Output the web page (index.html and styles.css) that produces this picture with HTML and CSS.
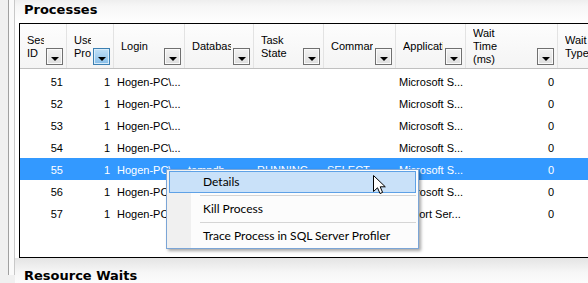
FILE: index.html
```html
<!DOCTYPE html>
<html lang="en">
<head>
    <meta charset="UTF-8">
    <title>Activity Monitor - Processes</title>
    <link rel="stylesheet" href="styles.css">
</head>
<body>
    <div class="frame">
        <div class="panel">
            <div class="section-title first">Processes</div>

            <div class="grid">
                <div class="grid-head">
                    <div class="head-cell"><span class="label">Session<br>ID</span><span class="drop"></span></div>
                    <div class="head-cell"><span class="label">User<br>Process</span><span class="drop active"></span></div>
                    <div class="head-cell"><span class="label">Login</span><span class="drop"></span></div>
                    <div class="head-cell"><span class="label">Database</span><span class="drop"></span></div>
                    <div class="head-cell"><span class="label">Task<br>State</span><span class="drop"></span></div>
                    <div class="head-cell"><span class="label">Command</span><span class="drop"></span></div>
                    <div class="head-cell"><span class="label">Application</span><span class="drop"></span></div>
                    <div class="head-cell"><span class="label">Wait<br>Time<br>(ms)</span><span class="drop"></span></div>
                    <div class="head-cell"><span class="label">Wait<br>Type</span><span class="drop"></span></div>
                </div>
                <div class="grid-body">
                    <div class="row">
                        <div class="cell num">51</div><div class="cell num">1</div><div class="cell">Hogen-PC\...</div>
                        <div class="cell"></div><div class="cell"></div><div class="cell"></div>
                        <div class="cell">Microsoft S...</div><div class="cell num">0</div><div class="cell"></div>
                    </div>
                    <div class="row">
                        <div class="cell num">52</div><div class="cell num">1</div><div class="cell">Hogen-PC\...</div>
                        <div class="cell"></div><div class="cell"></div><div class="cell"></div>
                        <div class="cell">Microsoft S...</div><div class="cell num">0</div><div class="cell"></div>
                    </div>
                    <div class="row">
                        <div class="cell num">53</div><div class="cell num">1</div><div class="cell">Hogen-PC\...</div>
                        <div class="cell"></div><div class="cell"></div><div class="cell"></div>
                        <div class="cell">Microsoft S...</div><div class="cell num">0</div><div class="cell"></div>
                    </div>
                    <div class="row">
                        <div class="cell num">54</div><div class="cell num">1</div><div class="cell">Hogen-PC\...</div>
                        <div class="cell"></div><div class="cell"></div><div class="cell"></div>
                        <div class="cell">Microsoft S...</div><div class="cell num">0</div><div class="cell"></div>
                    </div>
                    <div class="row selected">
                        <div class="cell num">55</div><div class="cell num">1</div><div class="cell">Hogen-PC\...</div>
                        <div class="cell">tempdb</div><div class="cell">RUNNING</div><div class="cell">SELECT</div>
                        <div class="cell">Microsoft S...</div><div class="cell num">0</div><div class="cell"></div>
                    </div>
                    <div class="row">
                        <div class="cell num">56</div><div class="cell num">1</div><div class="cell">Hogen-PC\...</div>
                        <div class="cell"></div><div class="cell"></div><div class="cell"></div>
                        <div class="cell">Microsoft S...</div><div class="cell num">0</div><div class="cell"></div>
                    </div>
                    <div class="row">
                        <div class="cell num">57</div><div class="cell num">1</div><div class="cell">Hogen-PC\...</div>
                        <div class="cell"></div><div class="cell"></div><div class="cell"></div>
                        <div class="cell">Report Ser...</div><div class="cell num">0</div><div class="cell"></div>
                    </div>
                </div>
            </div>

            <div class="section-title">Resource Waits</div>
        </div>
    </div>

    <!-- context menu for the selected process -->
    <div class="context-menu">
        <div class="menu-item hover">Details</div>
        <div class="menu-sep"></div>
        <div class="menu-item">Kill Process</div>
        <div class="menu-sep"></div>
        <div class="menu-item">Trace Process in SQL Server Profiler</div>
    </div>

    <svg class="cursor" width="13" height="20" viewBox="0 0 13 20">
        <path d="M0.5 0.5 L0.5 16.5 L4.5 12.8 L7 18.5 L9.6 17.4 L7.2 11.8 L12.3 11.8 Z" fill="#fff" stroke="#000" stroke-width="1" stroke-linejoin="miter"/>
    </svg>
</body>
</html>
```

FILE: styles.css
```css
* {
    margin: 0;
    padding: 0;
    box-sizing: border-box;
}

body {
    font-family: 'Liberation Sans', Arial, sans-serif;
    font-size: 11px;
    background: #f0f0f0;
    overflow: hidden;
    height: 283px;
}

.frame {
    margin-left: 8px;
    border-left: 1px solid #a0a0a0;
    padding-left: 5px;
    background: #fafafa;
    height: 283px;
}

.panel {
    border-left: 1px solid #c8c8c8;
    background: #fff;
    height: 283px;
}

.section-title {
    height: 31px;
    padding: 10px 0 0 9px;
    font-family: 'DejaVu Sans', Verdana, sans-serif;
    font-weight: bold;
    font-size: 13px;
    line-height: 15px;
    color: #000;
    background: linear-gradient(#e4e4e4, #f6f6f6 45%, #fff);
}

.section-title.first {
    margin-top: -8px;
}

.grid {
    margin-left: 4px;
    border-left: 1px solid #000;
    border-top: 1px solid #000;
    border-bottom: 1px solid #000;
    width: 700px;
}

.grid-head,
.row {
    display: grid;
    grid-template-columns: 47px 47px 71px 69px 70px 72px 70px 92px 80px;
}

.grid-head {
    height: 45px;
    border-bottom: 1px solid #c0c0c0;
    background: linear-gradient(#fdfdfd, #f4f4f4);
}

.head-cell {
    display: flex;
    padding-left: 7px;
    border-right: 1px solid #e3e3e3;
    min-width: 0;
}

.label {
    flex: 1;
    align-self: center;
    overflow: hidden;
    white-space: nowrap;
    line-height: 13px;
    padding-top: 1px;
    color: #000;
}

.drop {
    flex: none;
    align-self: flex-end;
    width: 17px;
    height: 17px;
    margin: 0 3px 3px 2px;
    border: 1px solid #707070;
    background: linear-gradient(#f2f2f2, #dedede);
    box-shadow: inset 0 0 0 1px #fafafa;
    display: flex;
    align-items: center;
    justify-content: center;
    padding-top: 5px;
}

.drop::after {
    content: '';
    width: 0;
    height: 0;
    border-left: 4px solid transparent;
    border-right: 4px solid transparent;
    border-top: 4px solid #000;
}

.drop.active {
    border-color: #3c7fb1;
    background: linear-gradient(#c2e1f7, #86bde8);
    box-shadow: inset 0 0 0 1px #d8ecfa;
}

.grid-body {
    height: 188px;
    padding-top: 1px;
    background: #fff;
}

.row {
    height: 22px;
}

.cell {
    padding: 2px 4px 0 3px;
    height: 22px;
    line-height: 21px;
    white-space: nowrap;
    overflow: hidden;
    color: #000;
}

.cell.num {
    text-align: right;
}

.row.selected {
    background: #3399ff;
}

.row.selected .cell {
    color: #fff;
}

.context-menu {
    position: absolute;
    left: 166px;
    top: 169px;
    width: 253px;
    padding: 1px 2px 1px 2px;
    border: 1px solid #7ba5d6;
    background: linear-gradient(to right, #f0f0f0 0, #f0f0f0 24px, #fcfcfc 24px);
    box-shadow: 2px 2px 3px rgba(0, 0, 0, 0.35);
    font-family: 'Segoe UI', Lato, sans-serif;
    font-size: 12px;
}

.menu-item {
    height: 22px;
    line-height: 20px;
    padding-left: 33px;
    border: 1px solid transparent;
    color: #000;
}

.menu-item.hover {
    background: #c9e1f9;
    border-color: #5ea1e6;
}

.menu-sep {
    height: 1px;
    margin: 2px 0 2px 31px;
    background: #d5d5d5;
}

.cursor {
    position: absolute;
    left: 373px;
    top: 175px;
}
```
